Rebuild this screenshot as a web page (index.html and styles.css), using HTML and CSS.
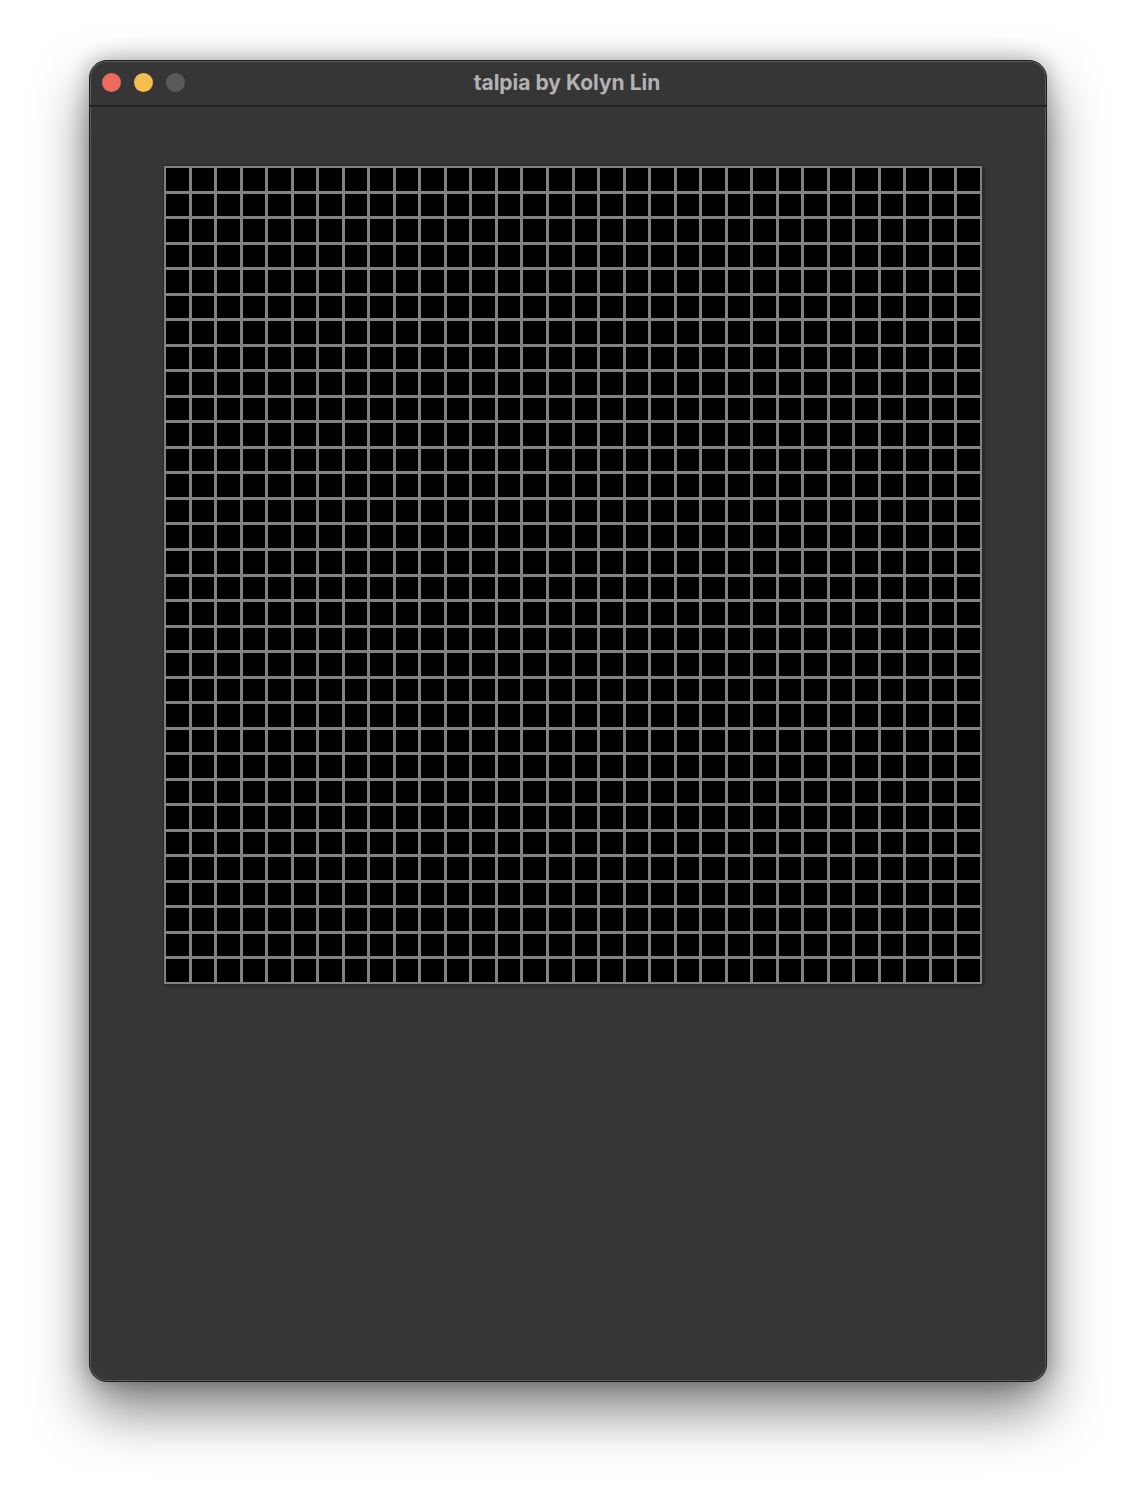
FILE: index.html
```html
<!DOCTYPE html>
<html lang="en">
<head>
    <meta charset="UTF-8">
    <meta name="viewport" content="width=device-width, initial-scale=1.0">
    <title>talpia by Kolyn Lin</title>
    <link rel="stylesheet" href="styles.css">
</head>
<body>
    <div class="window">
        <div class="titlebar">
            <div class="lights">
                <span class="light close"></span>
                <span class="light minimize"></span>
                <span class="light zoom"></span>
            </div>
            <div class="title">talpia by Kolyn Lin</div>
        </div>

        <div class="content">
            <div id="board" class="board"></div>
        </div>
    </div>

    <script>
        var size = 32; // celdas por lado
        var board = document.getElementById('board');

        for (var i = 0; i < size * size; i++) {
            var cell = document.createElement('div');
            cell.className = 'cell';
            board.appendChild(cell);
        }
    </script>
</body>
</html>
```

FILE: styles.css
```css
html {
    background-color: #ffffff;
}
body {
    margin: 0;
    padding: 60px 0 118px 89px;
    font-family: Inter, "Open Sans", Arial, sans-serif;
}
.window {
    box-sizing: border-box;
    width: 958px;
    height: 1322px;
    background-color: #363636;
    border: 1px solid #1e1e1e;
    border-radius: 18px;
    box-shadow: inset 0 0 0 1px #5c5c5c, 0 28px 55px rgba(0, 0, 0, 0.5), 0 0 22px rgba(0, 0, 0, 0.3);
    overflow: hidden;
}
.titlebar {
    position: relative;
    height: 44px;
    border-bottom: 1px solid #1c1c1c;
    box-shadow: 0 1px 0 #2c2c2c;
    display: flex;
    align-items: center;
    justify-content: center;
}
.lights {
    position: absolute;
    left: 12px;
    top: 12px;
    display: flex;
    gap: 13px;
}
.light {
    width: 19px;
    height: 19px;
    border-radius: 50%;
    display: block;
}
.close {
    background-color: #ec6a5e;
}
.minimize {
    background-color: #f4bf4f;
}
.zoom {
    background-color: #5a5a5a;
}
.title {
    color: #b2b2b2;
    font-size: 21px;
    font-weight: 700;
    margin-left: -2px;
    margin-top: -2px;
}
.content {
    padding: 60px 0 0 74px;
}
.board {
    width: 818px;
    height: 818px;
    box-sizing: border-box;
    padding: 2px;
    display: grid;
    grid-template-columns: repeat(32, 1fr);
    grid-template-rows: repeat(32, 1fr);
    gap: 3px;
    background-color: #828282;
    outline: 1px solid #2b2b2b;
    box-shadow: 2px 2px 4px rgba(0, 0, 0, 0.35);
}
.cell {
    background-color: #000000;
}
```
